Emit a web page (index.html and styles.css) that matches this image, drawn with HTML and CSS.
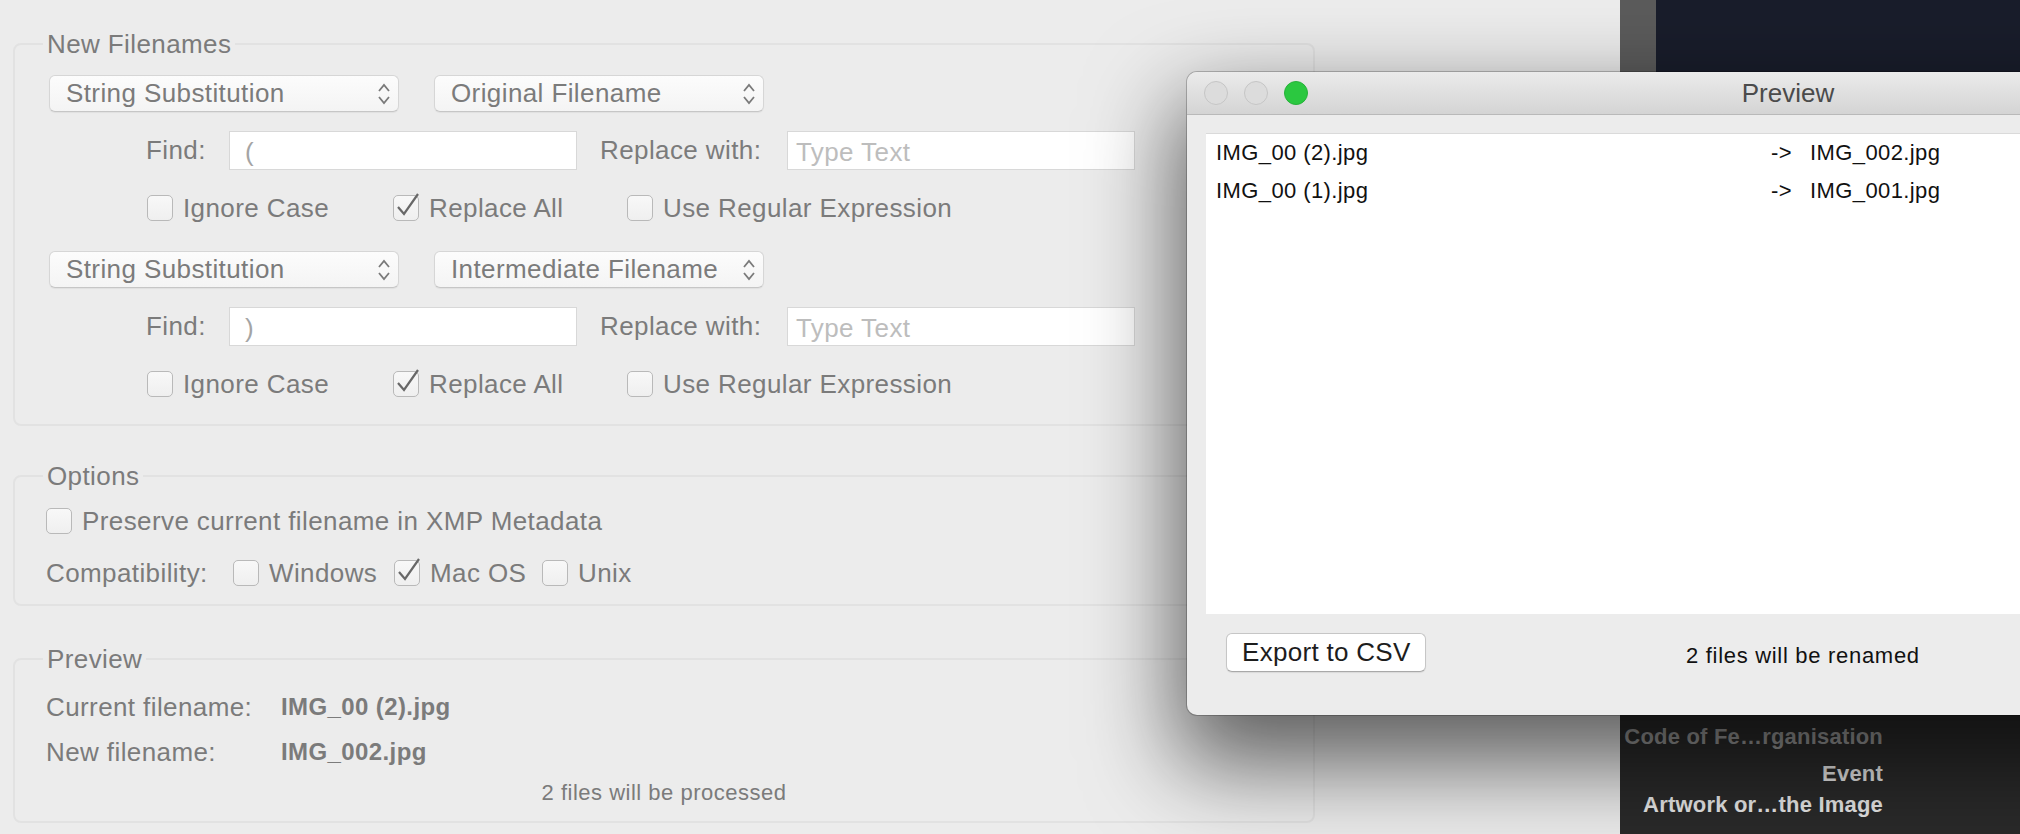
FILE: index.html
```html
<!DOCTYPE html>
<html lang="en">

<head>
    <meta charset="UTF-8">
    <meta name="viewport" content="width=device-width, initial-scale=1.0">
    <title>Batch Rename</title>
    <link rel="stylesheet" href="styles.css">
</head>

<body>
    <div class="desktop">
        <main class="batch-window">
            <fieldset class="group">
                <legend>New Filenames</legend>
                <div class="rules">
                    <div class="rule">
                        <div class="popup-row">
                            <div class="popup popup-method">String Substitution
                                <svg class="stepper" viewBox="0 0 14 24"><path d="M2 9 L7 3 L12 9 M2 15 L7 21 L12 15" /></svg>
                            </div>
                            <div class="popup popup-source">Original Filename
                                <svg class="stepper" viewBox="0 0 14 24"><path d="M2 9 L7 3 L12 9 M2 15 L7 21 L12 15" /></svg>
                            </div>
                        </div>
                        <div class="find-row">
                            <span class="find-label">Find:</span>
                            <div class="field field-value">(</div>
                            <span class="replace-label">Replace with:</span>
                            <div class="field field-empty">Type Text</div>
                        </div>
                        <div class="check-row">
                            <span class="check"><span class="box"></span>Ignore Case</span>
                            <span class="check"><span class="box"><svg class="tick" viewBox="0 0 28 30"><path d="M5 16 L11 23 L25 3" /></svg></span>Replace All</span>
                            <span class="check"><span class="box"></span>Use Regular Expression</span>
                        </div>
                    </div>
                    <div class="rule">
                        <div class="popup-row">
                            <div class="popup popup-method">String Substitution
                                <svg class="stepper" viewBox="0 0 14 24"><path d="M2 9 L7 3 L12 9 M2 15 L7 21 L12 15" /></svg>
                            </div>
                            <div class="popup popup-source">Intermediate Filename
                                <svg class="stepper" viewBox="0 0 14 24"><path d="M2 9 L7 3 L12 9 M2 15 L7 21 L12 15" /></svg>
                            </div>
                        </div>
                        <div class="find-row">
                            <span class="find-label">Find:</span>
                            <div class="field field-value">)</div>
                            <span class="replace-label">Replace with:</span>
                            <div class="field field-empty">Type Text</div>
                        </div>
                        <div class="check-row">
                            <span class="check"><span class="box"></span>Ignore Case</span>
                            <span class="check"><span class="box"><svg class="tick" viewBox="0 0 28 30"><path d="M5 16 L11 23 L25 3" /></svg></span>Replace All</span>
                            <span class="check"><span class="box"></span>Use Regular Expression</span>
                        </div>
                    </div>
                </div>
            </fieldset>

            <fieldset class="group group-options">
                <legend>Options</legend>
                <div class="options-body">
                    <div class="option-row">
                        <span class="check check-wide"><span class="box"></span>Preserve current filename in XMP Metadata</span>
                    </div>
                    <div class="option-row">
                        <span class="compat-label">Compatibility:</span>
                        <span class="check check-windows"><span class="box"></span>Windows</span>
                        <span class="check check-mac"><span class="box"><svg class="tick" viewBox="0 0 28 30"><path d="M5 16 L11 23 L25 3" /></svg></span>Mac OS</span>
                        <span class="check"><span class="box"></span>Unix</span>
                    </div>
                </div>
            </fieldset>

            <fieldset class="group group-preview">
                <legend>Preview</legend>
                <div class="preview-body">
                    <div class="preview-row">
                        <span class="preview-label">Current filename:</span>
                        <span class="preview-value">IMG_00 (2).jpg</span>
                    </div>
                    <div class="preview-row">
                        <span class="preview-label">New filename:</span>
                        <span class="preview-value">IMG_002.jpg</span>
                    </div>
                    <p class="processed">2 files will be processed</p>
                </div>
            </fieldset>
        </main>

        <aside class="back-app">
            <div class="back-top">
                <div class="back-strip"></div>
                <div class="back-canvas"></div>
            </div>
            <div class="back-meta">
                <span class="meta-muted">Code of Fe…rganisation</span>
                <span>Event</span>
                <span>Artwork or…the Image</span>
            </div>
        </aside>

        <section class="preview-window">
            <div class="title-bar">
                <div class="lights">
                    <span class="light"></span>
                    <span class="light"></span>
                    <span class="light light-zoom"></span>
                </div>
                <div class="window-title">Preview</div>
            </div>
            <div class="window-body">
                <div class="file-list">
                    <div class="file-row">
                        <span>IMG_00 (2).jpg</span>
                        <span>-&gt;</span>
                        <span>IMG_002.jpg</span>
                    </div>
                    <div class="file-row">
                        <span>IMG_00 (1).jpg</span>
                        <span>-&gt;</span>
                        <span>IMG_001.jpg</span>
                    </div>
                </div>
                <div class="list-footer">
                    <button class="export-button">Export to CSV</button>
                    <span class="rename-count">2 files will be renamed</span>
                </div>
            </div>
        </section>
    </div>
</body>

</html>
```

FILE: styles.css
```css
body {
    margin: 0;
    width: 2020px;
    height: 834px;
    overflow: hidden;
    font-family: "Liberation Sans", Arial, sans-serif;
}

.desktop {
    position: relative;
    display: flex;
    height: 834px;
}

/* main rename window */
.batch-window {
    flex: none;
    width: 1620px;
    box-sizing: border-box;
    padding-top: 29px;
    background: #ececec;
    color: #7b7b7b;
    font-size: 26px;
    letter-spacing: .4px;
}

.group {
    width: 1302px;
    min-width: 0;
    box-sizing: border-box;
    margin: 0 0 0 13px;
    padding: 0;
    border: 2px solid #e2e2e2;
    border-radius: 8px;
}

.group legend {
    margin-left: 28px;
    padding: 0 4px;
    line-height: 30px;
}

.group-options {
    margin-top: 35px;
}

.group-preview {
    margin-top: 38px;
}

.rules {
    padding: 16px 0 27px 34px;
}

.rule + .rule {
    margin-top: 30px;
}

.popup-row {
    display: flex;
    gap: 35px;
}

.popup {
    display: flex;
    align-items: center;
    justify-content: space-between;
    height: 37px;
    box-sizing: border-box;
    padding: 0 7px 0 16px;
    background: linear-gradient(#fcfcfc, #f4f4f4);
    border: 1px solid #d6d6d6;
    border-bottom-color: #c6c6c6;
    border-radius: 6px;
    box-shadow: 0 1px 1px rgba(0, 0, 0, .05);
}

.popup-method {
    width: 350px;
}

.popup-source {
    width: 330px;
}

.stepper {
    width: 14px;
    height: 24px;
    fill: none;
    stroke: #7a7a7a;
    stroke-width: 1.8;
}

.find-row {
    display: flex;
    align-items: center;
    height: 39px;
    margin-top: 19px;
    padding-left: 97px;
}

.find-label {
    width: 59px;
    margin-right: 24px;
}

.replace-label {
    width: 187px;
    margin-left: 23px;
}

.field {
    display: flex;
    align-items: center;
    width: 348px;
    height: 39px;
    box-sizing: border-box;
    padding: 4px 0 0 8px;
    background: #fff;
    border: 1px solid #d8d8d8;
}

.field-value {
    padding-left: 15px;
    color: #a4a4a4;
}

.field-empty {
    color: #bdbdbd;
}

.check-row {
    display: flex;
    align-items: center;
    height: 26px;
    margin-top: 25px;
    padding-left: 98px;
}

.check {
    display: flex;
    align-items: center;
    gap: 10px;
}

.check-row .check:nth-child(1) {
    width: 246px;
}

.check-row .check:nth-child(2) {
    width: 234px;
}

.box {
    position: relative;
    flex: none;
    width: 26px;
    height: 26px;
    box-sizing: border-box;
    background: linear-gradient(#f8f8f8, #efefef);
    border: 1px solid #b9b9b9;
    border-radius: 5px;
}

.tick {
    position: absolute;
    left: -1px;
    top: -5px;
    width: 28px;
    height: 30px;
    fill: none;
    stroke: #686868;
    stroke-width: 2.2;
}

.options-body {
    padding: 17px 0 18px 31px;
}

.option-row {
    display: flex;
    align-items: center;
    height: 26px;
}

.option-row + .option-row {
    margin-top: 26px;
}

.compat-label {
    width: 187px;
}

.check-windows {
    width: 161px;
}

.check-mac {
    width: 148px;
}

.preview-body {
    padding: 18px 0 13px;
}

.preview-row {
    display: flex;
    align-items: center;
    height: 30px;
    padding-left: 31px;
}

.preview-row + .preview-row {
    margin-top: 15px;
}

.preview-label {
    width: 235px;
}

.preview-value {
    font-weight: bold;
    font-size: 24px;
}

.processed {
    margin: 11px 0 0;
    line-height: 30px;
    font-size: 22px;
    letter-spacing: .5px;
    text-align: center;
}

/* app in the background */
.back-app {
    flex: 1;
    display: flex;
    flex-direction: column;
    background: #2a2a2a;
}

.back-top {
    flex: 1;
    display: flex;
}

.back-strip {
    width: 36px;
    background: #5b5b5b;
}

.back-canvas {
    flex: 1;
    background: #191d2b;
}

.back-meta {
    height: 300px;
    box-sizing: border-box;
    display: flex;
    flex-direction: column;
    justify-content: flex-end;
    align-items: flex-end;
    padding: 0 137px 14px 0;
    color: #e7e7e7;
    font-weight: bold;
    font-size: 22px;
    line-height: 31px;
    letter-spacing: .2px;
}

.meta-muted {
    color: #9a9a9a;
    margin-bottom: 6px;
}

/* floating preview window */
.preview-window {
    position: absolute;
    left: 1187px;
    top: 72px;
    z-index: 2;
    width: 1202px;
    height: 643px;
    display: flex;
    flex-direction: column;
    overflow: hidden;
    background: #ececec;
    border-radius: 10px;
    box-shadow: 0 0 0 1px rgba(0, 0, 0, .22), 0 40px 90px 10px rgba(0, 0, 0, .6);
}

.title-bar {
    flex: none;
    display: grid;
    grid-template-columns: 1fr auto 1fr;
    align-items: center;
    height: 43px;
    box-sizing: border-box;
    background: linear-gradient(#ebebeb, #d4d4d4);
    border-bottom: 1px solid #b9b9b9;
}

.lights {
    display: flex;
    gap: 16px;
    padding-left: 17px;
}

.light {
    width: 24px;
    height: 24px;
    box-sizing: border-box;
    border-radius: 50%;
    background: #dcdcdc;
    border: 1px solid #c5c5c5;
}

.light-zoom {
    background: #2bc840;
    border-color: #27b23a;
}

.window-title {
    color: #4b4b4b;
    font-size: 26px;
}

.window-body {
    padding: 18px 0 0 19px;
}

.file-list {
    height: 481px;
    box-sizing: border-box;
    background: #fff;
    border-top: 1px solid #dadada;
    color: #111;
    font-size: 22px;
    letter-spacing: .4px;
}

.file-row {
    display: grid;
    grid-template-columns: 555px 39px auto;
    align-items: center;
    height: 38px;
    padding-left: 10px;
}

.list-footer {
    display: flex;
    align-items: center;
    padding: 19px 0 0 20px;
}

.export-button {
    width: 200px;
    height: 39px;
    box-sizing: border-box;
    padding: 0 0 0 15px;
    text-align: left;
    background: #fff;
    border: 1px solid #c6c6c6;
    border-bottom-color: #a9a9a9;
    border-radius: 6px;
    box-shadow: 0 1px 1px rgba(0, 0, 0, .08);
    color: #1d1d1d;
    font-family: inherit;
    font-size: 26px;
    letter-spacing: .3px;
}

.rename-count {
    margin: 7px 0 0 260px;
    color: #111;
    font-size: 22px;
    letter-spacing: .7px;
}
```
